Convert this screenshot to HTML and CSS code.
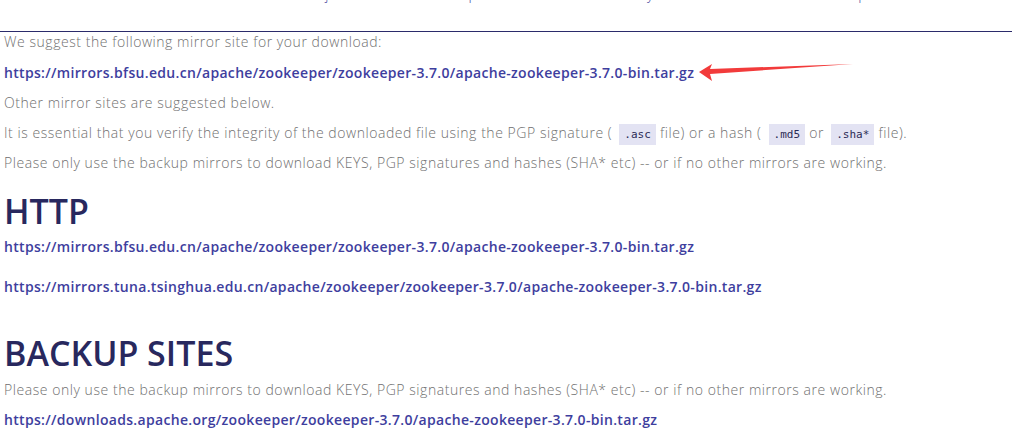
FILE: index.html
```html
<!DOCTYPE html>
<html>
<head>
<meta charset="utf-8">
<link rel="stylesheet" href="styles.css">
</head>
<body>
<header class="topbar">
  <nav class="nav">
    <a class="nav-item" href="#">Projects</a>
    <a class="nav-item" href="#">People</a>
    <a class="nav-item" href="#">Community</a>
    <a class="nav-item" href="#">License</a>
    <a class="nav-item" href="#">Sponsors</a>
  </nav>
</header>
<main class="content">
  <p class="text">We suggest the following mirror site for your download:</p>
  <p class="line"><a class="link" href="#">https://mirrors.bfsu.edu.cn/apache/zookeeper/zookeeper-3.7.0/apache-zookeeper-3.7.0-bin.tar.gz</a><svg class="arrow" width="156" height="20" viewBox="0 0 156 20"><polygon points="0,9 13,1 11,6 154,1 11,11 13,18" fill="#f23b3b"/></svg></p>
  <p class="text">Other mirror sites are suggested below.</p>
  <p class="text">It is essential that you verify the integrity of the downloaded file using the PGP signature ( <code class="chip">.asc</code> file) or a hash ( <code class="chip">.md5</code> or <code class="chip">.sha*</code> file).</p>
  <p class="text">Please only use the backup mirrors to download KEYS, PGP signatures and hashes (SHA* etc) -- or if no other mirrors are working.</p>
  <h2 class="heading">HTTP</h2>
  <p class="line"><a class="link" href="#">https://mirrors.bfsu.edu.cn/apache/zookeeper/zookeeper-3.7.0/apache-zookeeper-3.7.0-bin.tar.gz</a></p>
  <p class="line gap"><a class="link" href="#">https://mirrors.tuna.tsinghua.edu.cn/apache/zookeeper/zookeeper-3.7.0/apache-zookeeper-3.7.0-bin.tar.gz</a></p>
  <h2 class="heading backup">BACKUP SITES</h2>
  <p class="text">Please only use the backup mirrors to download KEYS, PGP signatures and hashes (SHA* etc) -- or if no other mirrors are working.</p>
  <p class="line"><a class="link" href="#">https://downloads.apache.org/zookeeper/zookeeper-3.7.0/apache-zookeeper-3.7.0-bin.tar.gz</a></p>
</main>
</body>
</html>
```
FILE: styles.css
```css
html, body {
  margin: 0;
  padding: 0;
  background: #ffffff;
}
body {
  font-family: "Open Sans", "Liberation Sans", sans-serif;
  overflow: hidden;
}
.topbar {
  height: 31px;
  border-bottom: 1px solid #2b2b6b;
  overflow: hidden;
}
.nav {
  display: flex;
  margin-top: -15px;
  padding-left: 302px;
  font-size: 14px;
  font-weight: 300;
  line-height: 20px;
  letter-spacing: 0.5px;
}
.nav-item {
  color: #4a4aa0;
  text-decoration: none;
}
.nav-item:nth-child(1) { width: 141px; }
.nav-item:nth-child(2) { width: 134px; }
.nav-item:nth-child(3) { width: 168px; }
.nav-item:nth-child(4) { width: 105px; }
.content {
  padding: 0 4px;
}
.text {
  margin: 0 0 10px;
  font-size: 14px;
  line-height: 20px;
  font-weight: 300;
  color: #707070;
  letter-spacing: 0.55px;
  white-space: nowrap;
}
.line {
  margin: 0 0 10px;
  font-size: 14px;
  line-height: 20px;
  display: flex;
  align-items: center;
  white-space: nowrap;
}
.link {
  color: #3e3e9e;
  font-weight: 600;
  letter-spacing: 0.32px;
  text-decoration: none;
}
.arrow {
  margin-left: 5px;
  margin-top: 1px;
}
.chip {
  font-family: "DejaVu Sans Mono", monospace;
  font-size: 11px;
  line-height: 1;
  letter-spacing: 0;
  background: #e3e3f3;
  color: #2b2b55;
  padding: 4px 5px;
  margin-left: 3px;
}
.heading {
  margin: 18px 0 6px;
  font-size: 34px;
  line-height: 40px;
  font-weight: 600;
  color: #28285e;
}
.gap {
  margin-top: 20px;
}
.backup {
  margin-top: 36px;
  margin-bottom: 7px;
}
```
